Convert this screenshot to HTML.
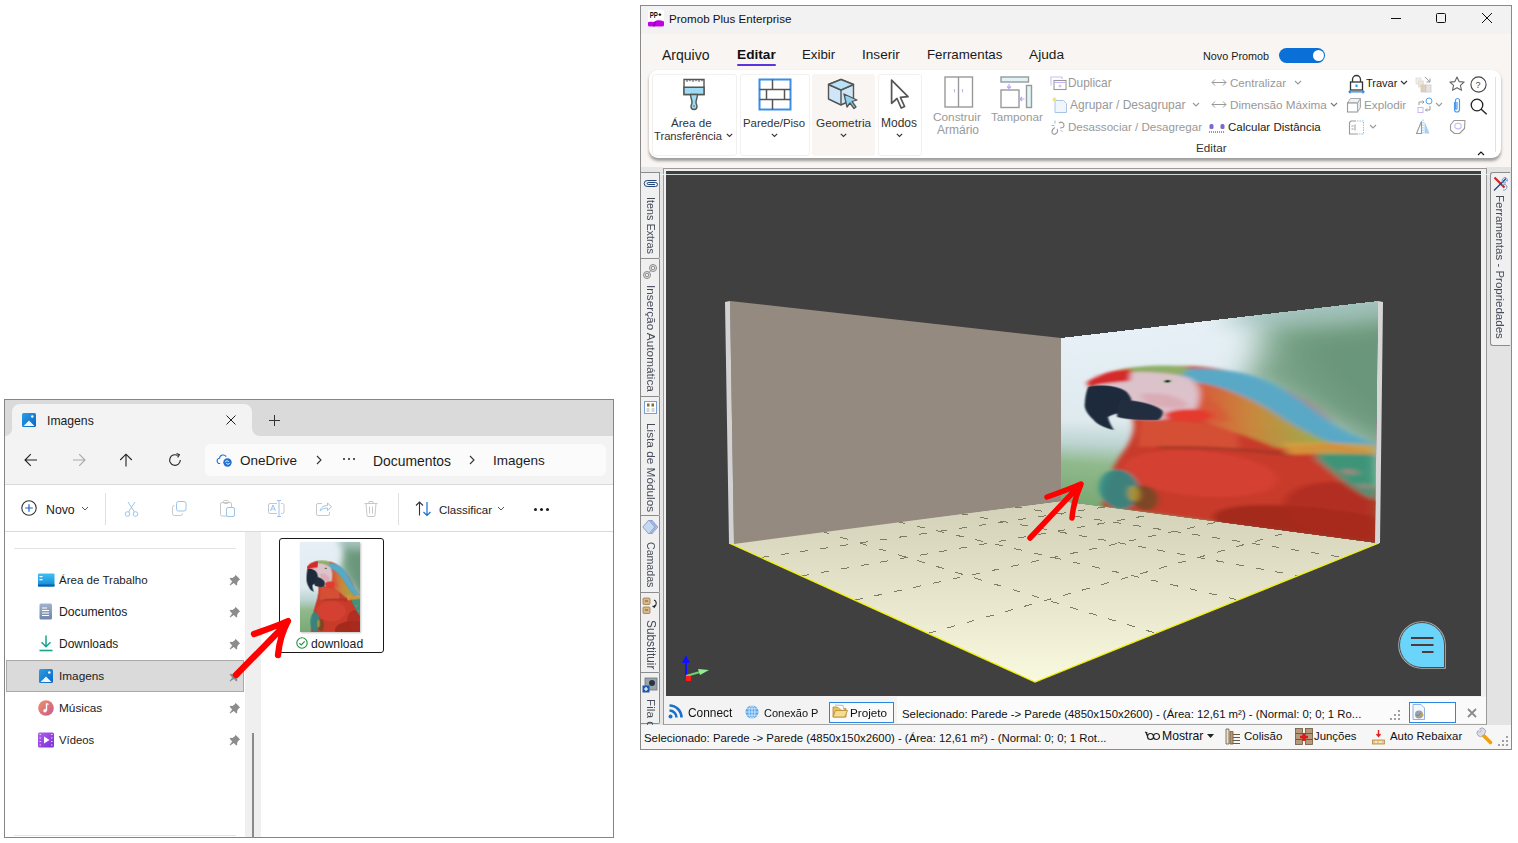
<!DOCTYPE html>
<html><head><meta charset="utf-8">
<style>
html,body{margin:0;padding:0}
body{width:1518px;height:843px;background:#fff;position:relative;overflow:hidden;font-family:"Liberation Sans",sans-serif;color:#1a1a1a}
.a{position:absolute}
.t{position:absolute;white-space:nowrap;line-height:16px;height:16px}
svg{position:absolute;overflow:visible}
</style></head><body>


<!-- ============ EXPLORER ============ -->
<div class="a" style="left:4px;top:399px;width:608px;height:437px;border:1px solid #858585;background:#fff"></div>
<div class="a" style="left:5px;top:400px;width:608px;height:84px;background:#f3f3f3"></div>
<div class="a" style="left:5px;top:400px;width:608px;height:12px;background:#dadada"></div>
<div class="a" style="left:5px;top:404px;width:7px;height:32px;background:#dadada;border-bottom-right-radius:7px"></div>
<div class="a" style="left:252px;top:404px;width:361px;height:32px;background:#dadada;border-bottom-left-radius:8px"></div>
<div class="a" style="left:12px;top:404px;width:240px;height:32px;background:#f3f3f3;border-radius:8px 8px 0 0"></div>
<!-- tab icon -->
<svg style="left:22px;top:413px" width="14" height="14" viewBox="0 0 14 14">
 <defs><linearGradient id="gImg" x1="0" y1="0" x2="1" y2="1"><stop offset="0" stop-color="#2aa0e6"/><stop offset="1" stop-color="#0b63c4"/></linearGradient></defs>
 <rect x="0" y="0" width="14" height="14" rx="1.5" fill="url(#gImg)"/>
 <path d="M1.5 13 L7 7.5 L12.5 13 Z" fill="#eef6fc"/>
 <circle cx="10.3" cy="3.5" r="1.2" fill="#fff"/>
</svg>
<div class="t" style="left:47px;top:413px;font-size:12.2px;color:#1b1b1b">Imagens</div>
<svg style="left:226px;top:415px" width="10" height="10" viewBox="0 0 10 10"><path d="M0.5 0.5L9.5 9.5M9.5 0.5L0.5 9.5" stroke="#1f1f1f" stroke-width="1"/></svg>
<svg style="left:269px;top:415px" width="11" height="11" viewBox="0 0 11 11"><path d="M5.5 0V11M0 5.5H11" stroke="#333" stroke-width="1"/></svg>
<!-- nav bar -->
<div class="a" style="left:5px;top:484px;width:608px;height:1px;background:#d9d9d9"></div>
<svg style="left:24px;top:453px" width="14" height="14" viewBox="0 0 14 14"><path d="M13 7H1.2M6.8 1.2L1 7l5.8 5.8" stroke="#222" stroke-width="1.1" fill="none"/></svg>
<svg style="left:72px;top:453px" width="14" height="14" viewBox="0 0 14 14"><path d="M1 7h11.8M7.2 1.2L13 7l-5.8 5.8" stroke="#a9a9a9" stroke-width="1.1" fill="none"/></svg>
<svg style="left:119px;top:453px" width="14" height="14" viewBox="0 0 14 14"><path d="M7 13.5V1.2M1.2 7L7 1.2 12.8 7" stroke="#222" stroke-width="1.1" fill="none"/></svg>
<svg style="left:168px;top:453px" width="14" height="14" viewBox="0 0 14 14"><path d="M12.3 7A5.3 5.3 0 1 1 9.6 2.4" stroke="#222" stroke-width="1.1" fill="none"/><path d="M8.6 0.6L11.4 1.8 9.6 4.4" stroke="#222" stroke-width="1.1" fill="none"/></svg>
<div class="a" style="left:205px;top:444px;width:401px;height:32px;background:#fbfbfb;border-radius:6px"></div>
<svg style="left:217px;top:452px" width="15" height="15" viewBox="0 0 15 15">
 <path d="M3.2 11.5H2.8A2.6 2.6 0 0 1 2.6 6.3 3.6 3.6 0 0 1 9.2 4.6" stroke="#1f6fd0" stroke-width="1.1" fill="none"/>
 <circle cx="10.5" cy="10.5" r="4.2" fill="#1f6fd0"/>
 <path d="M8.2 10.2c.6-1.6 2.4-1.8 3.6-.6M12.8 10.8c-.6 1.6-2.4 1.8-3.6.6" stroke="#fff" stroke-width="1" fill="none"/>
</svg>
<div class="t" style="left:240px;top:453px;font-size:13.5px;color:#1b1b1b">OneDrive</div>
<svg style="left:316px;top:455px" width="6" height="10" viewBox="0 0 6 10"><path d="M1 1l4 4-4 4" stroke="#333" stroke-width="1.1" fill="none"/></svg>
<div class="a" style="left:343px;top:458px;width:2.4px;height:2.4px;background:#222;border-radius:1.2px;box-shadow:5px 0 0 #222,10px 0 0 #222"></div>
<div class="t" style="left:373px;top:453px;font-size:13.9px;color:#1b1b1b">Documentos</div>
<svg style="left:469px;top:455px" width="6" height="10" viewBox="0 0 6 10"><path d="M1 1l4 4-4 4" stroke="#333" stroke-width="1.1" fill="none"/></svg>
<div class="t" style="left:493px;top:453px;font-size:13.5px;color:#1b1b1b">Imagens</div>
<!-- command bar -->
<div class="a" style="left:5px;top:531px;width:608px;height:1px;background:#d9d9d9"></div>
<svg style="left:21px;top:500px" width="16" height="16" viewBox="0 0 16 16"><circle cx="8" cy="8" r="7.2" stroke="#333" stroke-width="1.1" fill="none"/><path d="M8 4.2v7.6M4.2 8h7.6" stroke="#1a66c8" stroke-width="1.2"/></svg>
<div class="t" style="left:46px;top:502px;font-size:12.3px;color:#1b1b1b">Novo</div>
<svg style="left:81px;top:506px" width="8" height="5" viewBox="0 0 8 5"><path d="M1 1l3 3 3-3" stroke="#555" stroke-width="1" fill="none"/></svg>
<div class="a" style="left:105px;top:493px;width:1px;height:32px;background:#e0e0e0"></div>
<!-- cut -->
<svg style="left:124px;top:501px" width="15" height="16" viewBox="0 0 15 16"><path d="M4 1l6.5 10M11 1L4.5 11" stroke="#9cc4ea" stroke-width="1"/><circle cx="3.5" cy="13" r="2.3" stroke="#9cc4ea" fill="none"/><circle cx="11.5" cy="13" r="2.3" stroke="#9cc4ea" fill="none"/></svg>
<!-- copy -->
<svg style="left:172px;top:501px" width="15" height="15" viewBox="0 0 15 15"><rect x="4.5" y="0.5" width="9.5" height="9.5" rx="2" stroke="#9cc4ea" fill="none"/><path d="M2.5 4.5A2 2 0 0 0 .5 6.5v6a2 2 0 0 0 2 2h6a2 2 0 0 0 2-2" stroke="#c8c8c8" fill="none"/></svg>
<!-- paste -->
<svg style="left:220px;top:500px" width="15" height="17" viewBox="0 0 15 17"><rect x="0.5" y="2.5" width="11" height="13.5" rx="1.5" stroke="#c8c8c8" fill="none"/><rect x="3.5" y="0.5" width="5" height="3" rx="1" stroke="#c8c8c8" fill="none"/><rect x="6.5" y="7.5" width="8" height="9" rx="1.5" stroke="#9cc4ea" fill="#fff"/></svg>
<!-- rename -->
<svg style="left:268px;top:500px" width="17" height="17" viewBox="0 0 17 17"><path d="M9 3.5H2A1.5 1.5 0 0 0 .5 5v7A1.5 1.5 0 0 0 2 13.5h7M13 3.5h1.5A1.5 1.5 0 0 1 16 5v7a1.5 1.5 0 0 1-1.5 1.5H13" stroke="#c8c8c8" fill="none"/><path d="M11 .5v16M9 .5h4M9 16.5h4" stroke="#9cc4ea"/><path d="M2.5 11l2.5-6 2.5 6M3.5 9h3" stroke="#9cc4ea" fill="none"/></svg>
<!-- share -->
<svg style="left:316px;top:501px" width="16" height="15" viewBox="0 0 16 15"><path d="M6 2.5H2A1.5 1.5 0 0 0 .5 4v9A1.5 1.5 0 0 0 2 14.5h10a1.5 1.5 0 0 0 1.5-1.5v-2" stroke="#c8c8c8" fill="none"/><path d="M4 10c1-4 4-5.5 7.5-5.5V2l4 3.8-4 3.7V7C8.5 7 6 8 4 10z" stroke="#9cc4ea" fill="none"/></svg>
<!-- delete -->
<svg style="left:364px;top:500px" width="14" height="17" viewBox="0 0 14 17"><path d="M.5 3.5h13M5 3.5V1.5h4v2M2 3.5l1 12a1 1 0 0 0 1 1h6a1 1 0 0 0 1-1l1-12M5.5 6.5v7M8.5 6.5v7" stroke="#c8c8c8" fill="none"/></svg>
<div class="a" style="left:398px;top:493px;width:1px;height:32px;background:#e0e0e0"></div>
<svg style="left:415px;top:501px" width="17" height="15" viewBox="0 0 17 15"><path d="M4.5 14.5V1M1 4.5L4.5 1 8 4.5" stroke="#333" stroke-width="1.1" fill="none"/><path d="M12 1v13.5M8.5 11l3.5 3.5 3.5-3.5" stroke="#1a6fd0" stroke-width="1.2" fill="none"/></svg>
<div class="t" style="left:439px;top:502px;font-size:11.5px;color:#1b1b1b">Classificar</div>
<svg style="left:497px;top:506px" width="8" height="5" viewBox="0 0 8 5"><path d="M1 1l3 3 3-3" stroke="#555" stroke-width="1" fill="none"/></svg>
<div class="a" style="left:534px;top:508px;width:3px;height:3px;background:#1b1b1b;border-radius:2px;box-shadow:6px 0 0 #1b1b1b,12px 0 0 #1b1b1b"></div>

<!-- nav pane -->
<div class="a" style="left:14px;top:548px;width:222px;height:1px;background:#e3e3e3"></div>
<div class="a" style="left:6px;top:660px;width:236px;height:30px;background:#dadada;border:1px solid #a8a8a8"></div>
<!-- desktop icon -->
<svg style="left:38px;top:573px" width="17" height="14" viewBox="0 0 17 14"><defs><linearGradient id="gDk" x1="0" y1="0" x2="0" y2="1"><stop offset="0" stop-color="#3fc1f3"/><stop offset="1" stop-color="#1187d6"/></linearGradient></defs><rect x="0" y="0.5" width="16.5" height="13" rx="1" fill="url(#gDk)"/><rect x="1.5" y="3" width="3" height="1.3" fill="#fff"/><rect x="1.5" y="6" width="3" height="1.3" fill="#fff"/><rect x="0" y="11.5" width="16.5" height="2" fill="#0b5fa8"/></svg>
<div class="t" style="left:59px;top:572px;font-size:11.56px;color:#1b1b1b">Área de Trabalho</div>
<svg style="left:39px;top:603px" width="14" height="17" viewBox="0 0 14 17"><defs><linearGradient id="gDoc" x1="0" y1="0" x2="0" y2="1"><stop offset="0" stop-color="#9fb3cf"/><stop offset="1" stop-color="#6f86a8"/></linearGradient></defs><rect x="0.5" y="0.5" width="12.5" height="16" rx="1.5" fill="url(#gDoc)"/><path d="M3 5h5M3 7.5h7M3 10h7M3 12.5h7" stroke="#fff" stroke-width="1"/></svg>
<div class="t" style="left:59px;top:604px;font-size:12.2px;color:#1b1b1b">Documentos</div>
<svg style="left:39px;top:635px" width="14" height="17" viewBox="0 0 14 17"><path d="M7 0.5v11M2.5 7.2L7 11.7l4.5-4.5" stroke="#14a58a" stroke-width="1.5" fill="none"/><path d="M0.5 15.5h13" stroke="#14a58a" stroke-width="1.6"/></svg>
<div class="t" style="left:59px;top:636px;font-size:12px;color:#1b1b1b">Downloads</div>
<svg style="left:39px;top:669px" width="14" height="14" viewBox="0 0 14 14"><defs><linearGradient id="gImg2" x1="0" y1="0" x2="1" y2="1"><stop offset="0" stop-color="#2aa0e6"/><stop offset="1" stop-color="#0b63c4"/></linearGradient></defs><rect x="0" y="0" width="14" height="14" rx="1.5" fill="url(#gImg2)"/><path d="M1.5 13 L7 7.5 L12.5 13 Z" fill="#eef6fc"/><circle cx="10.3" cy="3.5" r="1.2" fill="#fff"/></svg>
<div class="t" style="left:59px;top:668px;font-size:11.8px;color:#1b1b1b">Imagens</div>
<svg style="left:38px;top:700px" width="16" height="16" viewBox="0 0 16 16"><defs><linearGradient id="gMus" x1="0" y1="0" x2="1" y2="1"><stop offset="0" stop-color="#f0906a"/><stop offset="1" stop-color="#c85a8a"/></linearGradient></defs><circle cx="8" cy="8" r="7.8" fill="url(#gMus)"/><path d="M8.5 3.5v7" stroke="#fff" stroke-width="1.4"/><circle cx="7" cy="10.8" r="1.7" fill="#fff"/><path d="M8.5 3.5l2 1" stroke="#fff" stroke-width="1.3"/></svg>
<div class="t" style="left:59px;top:700px;font-size:11.8px;color:#1b1b1b">Músicas</div>
<svg style="left:38px;top:732px" width="16" height="16" viewBox="0 0 16 16"><defs><linearGradient id="gVid" x1="0" y1="0" x2="1" y2="1"><stop offset="0" stop-color="#b45df0"/><stop offset="1" stop-color="#7a2fd0"/></linearGradient></defs><rect x="0" y="0.5" width="16" height="15" rx="1.5" fill="url(#gVid)"/><path d="M6 4.5v7l5.5-3.5z" fill="#fff"/><path d="M1.5 2.5h1.5M1.5 6h1.5M1.5 9.5h1.5M1.5 13h1.5M13 2.5h1.5M13 6h1.5M13 9.5h1.5M13 13h1.5" stroke="#e8d4ff" stroke-width="1.2"/></svg>
<div class="t" style="left:59px;top:732px;font-size:11.3px;color:#1b1b1b">Vídeos</div>
<!-- pins -->
<svg style="left:229px;top:574px" width="12" height="12" viewBox="0 0 12 12"><path d="M6.5 0.8l4.7 4.7-1.2 0.6-1.9 2.6 0.2 2-1 0.8L4.8 9 1.2 11.6 0.6 11 3.2 7.4 0.7 4.8l.8-1 2 .2 2.6-1.9z" fill="#8c8c8c"/></svg>
<svg style="left:229px;top:606px" width="12" height="12" viewBox="0 0 12 12"><path d="M6.5 0.8l4.7 4.7-1.2 0.6-1.9 2.6 0.2 2-1 0.8L4.8 9 1.2 11.6 0.6 11 3.2 7.4 0.7 4.8l.8-1 2 .2 2.6-1.9z" fill="#8c8c8c"/></svg>
<svg style="left:229px;top:638px" width="12" height="12" viewBox="0 0 12 12"><path d="M6.5 0.8l4.7 4.7-1.2 0.6-1.9 2.6 0.2 2-1 0.8L4.8 9 1.2 11.6 0.6 11 3.2 7.4 0.7 4.8l.8-1 2 .2 2.6-1.9z" fill="#8c8c8c"/></svg>
<svg style="left:229px;top:670px" width="12" height="12" viewBox="0 0 12 12"><path d="M6.5 0.8l4.7 4.7-1.2 0.6-1.9 2.6 0.2 2-1 0.8L4.8 9 1.2 11.6 0.6 11 3.2 7.4 0.7 4.8l.8-1 2 .2 2.6-1.9z" fill="#8c8c8c"/></svg>
<svg style="left:229px;top:702px" width="12" height="12" viewBox="0 0 12 12"><path d="M6.5 0.8l4.7 4.7-1.2 0.6-1.9 2.6 0.2 2-1 0.8L4.8 9 1.2 11.6 0.6 11 3.2 7.4 0.7 4.8l.8-1 2 .2 2.6-1.9z" fill="#8c8c8c"/></svg>
<svg style="left:229px;top:734px" width="12" height="12" viewBox="0 0 12 12"><path d="M6.5 0.8l4.7 4.7-1.2 0.6-1.9 2.6 0.2 2-1 0.8L4.8 9 1.2 11.6 0.6 11 3.2 7.4 0.7 4.8l.8-1 2 .2 2.6-1.9z" fill="#8c8c8c"/></svg>

<div class="a" style="left:14px;top:835px;width:222px;height:1px;background:#e6e6e6"></div>
<!-- splitter -->
<div class="a" style="left:245px;top:532px;width:16px;height:305px;background:#efefef"></div>
<div class="a" style="left:252px;top:733px;width:2px;height:104px;background:#8a8a8a"></div>
<!-- thumbnail -->
<div class="a" style="left:279px;top:538px;width:103px;height:113px;border:1.5px solid #1a1a1a;border-radius:3px;background:#fff"></div>
<div class="a" style="left:300px;top:542px;width:60px;height:90px;overflow:hidden;box-shadow:1px 1px 2px rgba(0,0,0,.25)"><div style="position:absolute;left:0;top:0;width:600px;height:900px;transform:scale(0.1);transform-origin:0 0"><svg width="600" height="900" viewBox="0 0 600 900" style="position:absolute;left:0;top:0;overflow:hidden">
 <defs>
  <linearGradient id="thbg" x1="0" y1="0" x2="0" y2="1"><stop offset="0" stop-color="#e6f0f6"/><stop offset=".5" stop-color="#dfeaef"/><stop offset=".64" stop-color="#bcd4d2"/><stop offset=".76" stop-color="#90b98c"/><stop offset="1" stop-color="#79a974"/></linearGradient>
  <linearGradient id="thnk" gradientUnits="userSpaceOnUse" x1="330" y1="0" x2="530" y2="0"><stop offset="0" stop-color="#d8603a"/><stop offset=".45" stop-color="#c8903e"/><stop offset="1" stop-color="#98b850"/></linearGradient>
  <filter id="thb0" x="-50%" y="-50%" width="200%" height="200%"><feGaussianBlur stdDeviation="30"/></filter>
  <filter id="thb1" x="-20%" y="-20%" width="140%" height="140%"><feGaussianBlur stdDeviation="7"/></filter>
  <filter id="thb2" x="-20%" y="-20%" width="140%" height="140%"><feGaussianBlur stdDeviation="3"/></filter>
 </defs>
 <rect width="600" height="900" fill="url(#thbg)"/>
 <g filter="url(#thb0)">
  <path d="M410 -40C440 60 435 170 405 260L640 640L680 -40Z" fill="#7aa488"/>
  <path d="M480 120C490 250 530 380 600 480L680 520L680 100Z" fill="#6a967c"/>
  <path d="M380 -40L680 -40L680 50C600 70 480 70 380 40Z" fill="#a9c7c4" opacity=".8"/>
 </g>
 <g filter="url(#thb1)">
  <path d="M74 245C160 185 260 180 330 205C420 240 500 330 545 460C570 500 590 525 600 530L600 900L110 900C115 800 130 700 160 610C180 550 190 480 180 440C120 420 80 330 74 245Z" fill="#c84a30"/>
  <path d="M190 440C260 432 330 440 400 462C470 490 540 515 600 530L600 900L110 900C115 800 130 700 160 610C180 550 190 500 190 440Z" fill="#c83a2a"/>
  <ellipse cx="310" cy="690" rx="150" ry="105" fill="#e04838" opacity=".5"/>
  <path d="M200 450C260 445 330 455 390 480L395 570C330 565 260 570 195 580Z" fill="#d8553a" opacity=".8"/>
  <ellipse cx="520" cy="880" rx="170" ry="90" fill="#98241a" opacity=".75"/>
  <ellipse cx="560" cy="790" rx="90" ry="110" fill="#a82a1c" opacity=".7"/>
  <path d="M240 578C320 570 400 566 480 585" stroke="#5a2a22" stroke-width="12" fill="none" opacity=".35"/>
  <path d="M300 210C360 215 410 235 450 290C495 350 525 420 545 460C565 495 590 520 600 530L600 562C580 552 560 542 540 532C510 502 490 472 470 442C440 392 400 332 350 292C320 272 290 262 260 257Z" fill="#58a8c6"/>
  <path d="M150 192C200 180 250 182 300 200L290 240C240 230 190 230 150 240Z" fill="#8fae68"/>
  <path d="M310 270C370 300 420 350 470 442C490 472 510 502 540 532L460 560C420 520 380 490 340 460C310 430 300 380 300 300Z" fill="url(#thnk)" opacity=".9"/>
  <path d="M300 300C340 330 370 390 380 450L320 455C310 400 300 360 290 320Z" fill="#d8583a" opacity=".75"/>
  <path d="M90 215C150 200 250 210 300 250C330 290 325 360 310 420C280 445 230 450 180 440C120 420 90 330 90 215Z" fill="#dcc2ca"/>
  <path d="M200 320C250 310 290 340 300 380C280 400 240 390 210 360Z" fill="#d89aa6" opacity=".55"/>
  <ellipse cx="300" cy="425" rx="48" ry="30" fill="#e43a2e"/>
  <path d="M70 250C100 205 150 190 180 195L175 255C140 258 100 262 75 275Z" fill="#d42a2a"/>
  <path d="M520 560C560 558 590 566 600 572L600 740C570 710 545 650 520 600Z" fill="#3e9478"/>
  <circle cx="565" cy="640" r="10" fill="#e07a80" opacity=".7"/><circle cx="585" cy="690" r="9" fill="#e07a80" opacity=".6"/>
  <path d="M468 536C520 528 570 530 600 534L600 568C560 570 520 576 475 584Z" fill="#d6a03e" opacity=".85"/>
  <ellipse cx="150" cy="800" rx="48" ry="100" fill="#2e8a86" opacity=".9"/>
  <ellipse cx="210" cy="830" rx="30" ry="60" fill="#6a4a24" opacity=".8"/>
  <ellipse cx="185" cy="815" rx="14" ry="40" fill="#c8a232" opacity=".7"/>
 </g>
 <g filter="url(#thb2)">
  <path d="M74 275C120 258 165 288 172 318C180 340 182 362 178 383C160 410 132 420 124 434C126 460 134 485 138 500C115 490 95 470 88 450C72 420 62 390 65 358C66 320 70 290 74 275Z" fill="#1c2a3b"/>
  <path d="M155 347C200 350 240 380 248 404C250 420 245 440 238 447C200 450 165 445 146 433C145 400 148 370 155 347Z" fill="#202f3f"/>
  <circle cx="258" cy="263" r="15" fill="#cdc8c0"/>
  <circle cx="258" cy="263" r="7" fill="#1e1e1e"/>
 </g>
</svg></div></div>
<svg style="left:296px;top:637px" width="12" height="12" viewBox="0 0 12 12"><circle cx="6" cy="6" r="5.2" stroke="#21913c" stroke-width="1.1" fill="#fff"/><path d="M3.3 6.2l1.9 1.8 3.5-3.6" stroke="#21913c" stroke-width="1.1" fill="none"/></svg>
<div class="t" style="left:311px;top:636px;font-size:12.2px;color:#1b1b1b">download</div>
<!-- red arrow -->
<svg style="left:0;top:0" width="1518" height="843"><path d="M236 675L287 623M254 634C265 630 277 626 288 621C282 632 279 644 278 655" stroke="#ff0000" stroke-width="6.3" stroke-linecap="round" stroke-linejoin="round" fill="none"/></svg>


<!-- ============ PROMOB ============ -->
<div class="a" style="left:640px;top:5px;width:870px;height:743px;border:1px solid #8a8a8a;background:#f8f5f2"></div>
<div class="a" style="left:641px;top:6px;width:870px;height:28px;background:#f2f2f2"></div>
<!-- logo -->
<svg style="left:648px;top:10px" width="16" height="17" viewBox="0 0 16 17">
 <rect x="0" y="0" width="16" height="17" rx="2" fill="#fff"/>
 <text x="0" y="0" font-family="Liberation Sans" font-weight="bold" font-size="7.4" fill="#111" transform="translate(1.8 8.2) scale(.82 1.15)" letter-spacing="-0.2">PP</text>
 <path d="M10.6 4.6h2.6M11.9 3.3v2.6" stroke="#111" stroke-width="1.1"/>
 <path d="M0 12.2c2-.6 4-.5 6-.2 1.8-2.2 6-2.2 10-.6V15a1.5 1.5 0 0 1-1.5 1.5H1.5A1.5 1.5 0 0 1 0 15z" fill="#c100e6"/>
 <path d="M6.2 11.9c-.9 1.2-1.3 2.9-1.1 4.6h2c0-1.8.2-3.3 1-4.9z" fill="#6a0080" opacity=".55"/>
</svg>
<div class="t" style="left:669px;top:11px;font-size:11.6px;color:#111">Promob Plus Enterprise</div>
<div class="a" style="left:1391px;top:18px;width:10px;height:1px;background:#111"></div>
<div class="a" style="left:1436px;top:13px;width:8px;height:8px;border:1px solid #111;border-radius:1.5px"></div>
<svg style="left:1481px;top:12px" width="12" height="12" viewBox="0 0 12 12"><path d="M1 1l10 10M11 1L1 11" stroke="#111" stroke-width="1"/></svg>
<!-- menu -->
<div class="t" style="left:662px;top:47px;font-size:14px;color:#1a1a1a">Arquivo</div>
<div class="t" style="left:737px;top:47px;font-size:13.7px;font-weight:bold;color:#111">Editar</div>
<div class="a" style="left:737px;top:64px;width:39px;height:2px;background:#5a34e0;border-radius:1px"></div>
<div class="t" style="left:802px;top:47px;font-size:13.3px;color:#1a1a1a">Exibir</div>
<div class="t" style="left:862px;top:47px;font-size:13.6px;color:#1a1a1a">Inserir</div>
<div class="t" style="left:927px;top:47px;font-size:13.3px;color:#1a1a1a">Ferramentas</div>
<div class="t" style="left:1029px;top:47px;font-size:13.7px;color:#1a1a1a">Ajuda</div>
<div class="t" style="left:1203px;top:48px;font-size:10.8px;color:#1a1a1a">Novo Promob</div>
<div class="a" style="left:1279px;top:48px;width:46px;height:15px;background:#0a6fd6;border-radius:8px"></div>
<div class="a" style="left:1313px;top:50px;width:11px;height:11px;background:#fff;border-radius:6px"></div>
<!-- ribbon panel -->
<div class="a" style="left:649px;top:70px;width:852px;height:88px;background:#fff;border-radius:9px;box-shadow:0 2.5px 3px rgba(0,0,0,.36)"></div>
<div class="a" style="left:652px;top:74px;width:83px;height:80px;border:1px solid #f3f1ef;border-radius:3px"></div>
<div class="a" style="left:740px;top:74px;width:68px;height:80px;border:1px solid #f3f1ef;border-radius:3px"></div>
<div class="a" style="left:812px;top:74px;width:63px;height:82px;background:#f8f5f2;border-radius:3px"></div>
<div class="a" style="left:878px;top:74px;width:42px;height:80px;border:1px solid #f3f1ef;border-radius:3px"></div>
<!-- paintbrush -->
<svg style="left:682px;top:78px" width="24" height="33" viewBox="0 0 24 33">
 <path d="M2 1.5h20v15H2z" fill="#fff" stroke="#555" stroke-width="1.4"/>
 <path d="M2 9.2h20v7.3H2z" fill="#9ddcf2" stroke="#555" stroke-width="1.4"/>
 <path d="M5 1.5v2.5M8 1.5v1.8M11 1.5v2.5M14 1.5v1.8M17 1.5v2.5M20 1.5v1.8" stroke="#555" stroke-width="1"/>
 <path d="M8.5 16.5h7c0 3-1.5 5-1.5 8 0 1.5 1 2.5 1 4a3 3 0 0 1-6 0c0-1.5 1-2.5 1-4 0-3-1.5-5-1.5-8z" fill="#9ddcf2" stroke="#555" stroke-width="1.4" stroke-linejoin="round"/>
 <circle cx="12" cy="28" r=".8" fill="#555"/>
</svg>
<div class="t" style="left:671px;top:115px;font-size:11.6px;color:#333">Área de</div>
<div class="t" style="left:654px;top:128px;font-size:11.2px;color:#333">Transferência</div>
<svg style="left:726px;top:133px" width="7" height="5" viewBox="0 0 7 5"><path d="M.8 .8l2.7 2.7L6.2 .8" stroke="#333" stroke-width="1.1" fill="none"/></svg>
<!-- brick wall -->
<svg style="left:758px;top:78px" width="34" height="33" viewBox="0 0 34 33">
 <rect x="1.5" y="1.5" width="31" height="30" fill="#fff" stroke="#3b8ee8" stroke-width="2"/>
 <path d="M1.5 11.5h31M1.5 21.5h31M14.5 1.5v10M8.5 11.5v10M26.5 11.5v10M14.5 21.5v10" stroke="#555" stroke-width="1.5"/>
</svg>
<div class="t" style="left:743px;top:115px;font-size:11.4px;color:#333">Parede/Piso</div>
<svg style="left:771px;top:133px" width="7" height="5" viewBox="0 0 7 5"><path d="M.8 .8l2.7 2.7L6.2 .8" stroke="#333" stroke-width="1.1" fill="none"/></svg>
<!-- cube with cursor -->
<svg style="left:827px;top:78px" width="34" height="33" viewBox="0 0 34 33">
 <path d="M14 1.5L26.5 6.5 26.5 21 14 27 1.5 21 1.5 6.5Z" fill="#cfe6f8" stroke="#555" stroke-width="1.4" stroke-linejoin="round"/>
 <path d="M1.5 6.5L14 12 26.5 6.5M14 12v15" stroke="#555" stroke-width="1.4" fill="none"/>
 <path d="M14 1.5L26.5 6.5 14 12 1.5 6.5Z" fill="#b8e2f6" stroke="#555" stroke-width="1.4" stroke-linejoin="round"/>
 <path d="M17 16l13 6-5 1.5 4 5.5-2 1.5-4-5.5-3 4z" fill="#8fd3ee" stroke="#555" stroke-width="1.3" stroke-linejoin="round"/>
</svg>
<div class="t" style="left:816px;top:115px;font-size:11.8px;color:#333">Geometria</div>
<svg style="left:840px;top:133px" width="7" height="5" viewBox="0 0 7 5"><path d="M.8 .8l2.7 2.7L6.2 .8" stroke="#333" stroke-width="1.1" fill="none"/></svg>
<!-- cursor -->
<svg style="left:888px;top:78px" width="22" height="33" viewBox="0 0 22 33">
 <path d="M3.6 2.2V25.3L9 20.5 13.2 30 16.6 28.5 12.4 19.3 20 18.7Z" fill="#fff" stroke="#555" stroke-width="1.7" stroke-linejoin="round"/>
</svg>
<div class="t" style="left:881px;top:115px;font-size:12px;color:#333">Modos</div>
<svg style="left:896px;top:133px" width="7" height="5" viewBox="0 0 7 5"><path d="M.8 .8l2.7 2.7L6.2 .8" stroke="#333" stroke-width="1.1" fill="none"/></svg>
<!-- construir armario -->
<svg style="left:944px;top:76px" width="30" height="32" viewBox="0 0 30 32">
 <rect x="1" y="1" width="27.5" height="30" fill="#fff" stroke="#999" stroke-width="1.4"/>
 <path d="M14.5 1v30" stroke="#999" stroke-width="1.4"/>
 <path d="M10.5 13v3.5M18.5 13v3.5" stroke="#c9b8f0" stroke-width="1.2"/>
</svg>
<div class="t" style="left:933px;top:109px;font-size:11.8px;color:#999">Construir</div>
<div class="t" style="left:937px;top:122px;font-size:12px;color:#999">Armário</div>
<!-- tamponar -->
<svg style="left:1000px;top:76px" width="34" height="33" viewBox="0 0 34 33">
 <rect x="1" y="1" width="27.5" height="5" fill="#dff4f8" stroke="#999" stroke-width="1.4"/>
 <rect x="1" y="14" width="18" height="17.5" fill="#fff" stroke="#999" stroke-width="1.4"/>
 <rect x="26.5" y="9.5" width="5" height="22" fill="#dff4f8" stroke="#999" stroke-width="1.4"/>
 <path d="M9 8v4.5M7 10.5l2 2 2-2M24.5 23h-4.5M22 21l-2 2 2 2" stroke="#b9a4f0" stroke-width="1.2" fill="none"/>
</svg>
<div class="t" style="left:991px;top:109px;font-size:11.7px;color:#999">Tamponar</div>
<!-- small col 1 -->
<svg style="left:1050px;top:76px" width="17" height="14" viewBox="0 0 17 14"><path d="M1 9.5V1h11v2" stroke="#c8c0f0" stroke-width="1.1" fill="none"/><rect x="4" y="4.5" width="12" height="9" fill="#fff" stroke="#999" stroke-width="1.1"/><path d="M4 6.5h12M10 8.5v3M8.5 10h3" stroke="#c3b3f3" stroke-width="1"/></svg>
<div class="t" style="left:1068px;top:75px;font-size:11.9px;color:#999">Duplicar</div>
<svg style="left:1052px;top:97px" width="15" height="16" viewBox="0 0 15 16"><path d="M3 3.5h8.5l3 3v9h-11.5z" fill="#f0f6fc" stroke="#a8c4e8" stroke-width="1"/><circle cx="2.5" cy="2.5" r="2" fill="#f6e27a"/></svg>
<div class="t" style="left:1070px;top:97px;font-size:12px;color:#999">Agrupar / Desagrupar</div>
<svg style="left:1192px;top:102px" width="8" height="6" viewBox="0 0 8 6"><path d="M1 1l3 3 3-3" stroke="#999" stroke-width="1.1" fill="none"/></svg>
<svg style="left:1050px;top:119px" width="16" height="17" viewBox="0 0 16 17"><path d="M9 4a3 3 0 0 1 5 2.5c0 2-2 2.5-4 2.5M7 10a3 3 0 0 1-1 4.5c-2 1.5-4 .5-4-1.5 0-2 2-4 3-4.5" stroke="#999" stroke-width="1.1" fill="none"/><path d="M1.5 6.5h3M5 1.5v3M10.5 11l2 2" stroke="#8fc0ef" stroke-width="1"/></svg>
<div class="t" style="left:1068px;top:119px;font-size:11.6px;color:#999">Desassociar / Desagregar</div>
<!-- small col 2 -->
<svg style="left:1211px;top:78px" width="16" height="9" viewBox="0 0 16 9"><path d="M1 4.5h14M4 1.5l-3 3 3 3M12 1.5l3 3-3 3" stroke="#999" stroke-width="1" fill="none"/></svg>
<div class="t" style="left:1230px;top:75px;font-size:11.6px;color:#999">Centralizar</div>
<svg style="left:1294px;top:80px" width="8" height="6" viewBox="0 0 8 6"><path d="M1 1l3 3 3-3" stroke="#999" stroke-width="1.1" fill="none"/></svg>
<svg style="left:1211px;top:100px" width="16" height="9" viewBox="0 0 16 9"><path d="M1 4.5h14M4 1.5l-3 3 3 3M12 1.5l3 3-3 3" stroke="#999" stroke-width="1" fill="none"/></svg>
<div class="t" style="left:1230px;top:97px;font-size:11.7px;color:#999">Dimensão Máxima</div>
<svg style="left:1330px;top:102px" width="8" height="6" viewBox="0 0 8 6"><path d="M1 1l3 3 3-3" stroke="#777" stroke-width="1.1" fill="none"/></svg>
<svg style="left:1208px;top:121px" width="18" height="12" viewBox="0 0 18 12"><path d="M1 11h16" stroke="#333" stroke-width="1" stroke-dasharray="1 1"/><rect x="1.5" y="3" width="4" height="5" rx="1.5" fill="#7a6ad0"/><rect x="12.5" y="3" width="4" height="5" rx="1.5" fill="#7a6ad0"/></svg>
<div class="t" style="left:1228px;top:119px;font-size:11.5px;color:#1a1a1a">Calcular Distância</div>
<div class="t" style="left:1196px;top:140px;font-size:11.7px;color:#333">Editar</div>
<!-- col 3 -->
<svg style="left:1348px;top:75px" width="17" height="18" viewBox="0 0 17 18"><path d="M4.5 7V4.5a4 4 0 0 1 8 0V7" stroke="#333" stroke-width="1.3" fill="none"/><rect x="2.5" y="7" width="12" height="8" fill="#fff" stroke="#333" stroke-width="1.3"/><rect x="7.5" y="9.5" width="2" height="2.5" fill="#1aa0e0"/><path d="M1 16.8h15M2.5 15.3l-1.5 1.5 1.5 1.5M14.5 15.3l1.5 1.5-1.5 1.5" stroke="#2a86e0" stroke-width="1.2" fill="none"/></svg>
<div class="t" style="left:1366px;top:75px;font-size:11px;color:#1a1a1a">Travar</div>
<svg style="left:1400px;top:80px" width="8" height="6" viewBox="0 0 8 6"><path d="M1 1l3 3 3-3" stroke="#333" stroke-width="1.2" fill="none"/></svg>
<svg style="left:1415px;top:76px" width="17" height="17" viewBox="0 0 17 17"><rect x="1" y="2" width="5" height="6" fill="#f4efe6" stroke="#ddd" stroke-width=".8"/><rect x="3.5" y="5" width="5" height="6" fill="#efe6d6" stroke="#ddd" stroke-width=".8"/><rect x="6" y="9" width="5" height="7" fill="#e0cfb4" stroke="#ccc" stroke-width=".8"/><rect x="11" y="9" width="5" height="7" fill="#e4e4e4" stroke="#ccc" stroke-width=".8"/><path d="M10 1l5 5M15 2.5V6h-3.5" stroke="#999" stroke-width="1" fill="none"/></svg>
<svg style="left:1449px;top:76px" width="16" height="16" viewBox="0 0 16 16"><path d="M8 1l2.1 4.6 5 .5-3.7 3.3 1.1 4.9L8 11.8 3.5 14.3l1.1-4.9L.9 6.1l5-.5z" fill="none" stroke="#666" stroke-width="1.1" stroke-linejoin="round"/></svg>
<svg style="left:1470px;top:76px" width="17" height="17" viewBox="0 0 17 17"><circle cx="8.5" cy="8.5" r="7.6" fill="none" stroke="#444" stroke-width="1.1"/><text x="5.6" y="12" font-family="Liberation Sans" font-size="9" fill="#444">?</text></svg>
<svg style="left:1346px;top:97px" width="17" height="16" viewBox="0 0 17 16"><path d="M1.5 6l3-4.5h10l-3 4.5z" fill="#eef3f8" stroke="#aaa" stroke-width="1"/><rect x="1.5" y="6" width="10" height="9" fill="#fff" stroke="#999" stroke-width="1.1"/><path d="M11.5 6l3-4.5v9l-3 4.5z" fill="#dfe8f0" stroke="#aaa" stroke-width="1"/></svg>
<div class="t" style="left:1364px;top:97px;font-size:11.7px;color:#999">Explodir</div>
<svg style="left:1417px;top:97px" width="16" height="17" viewBox="0 0 16 17"><circle cx="12" cy="4" r="3" fill="none" stroke="#4ea4f0" stroke-width="1"/><rect x="1" y="10.5" width="5" height="5" fill="none" stroke="#c8b8f4" stroke-width="1"/><path d="M2 8V5h5M5.5 3.5l1.5 1.5-1.5 1.5M13 9v4H8.5M10 11.5l-1.5 1.5 1.5 1.5" stroke="#999" stroke-width="1" fill="none"/></svg>
<svg style="left:1435px;top:102px" width="8" height="6" viewBox="0 0 8 6"><path d="M1 1l3 3 3-3" stroke="#999" stroke-width="1.1" fill="none"/></svg>
<svg style="left:1452px;top:97px" width="10" height="17" viewBox="0 0 10 17"><path d="M2.5 5v7.5a2.5 2.5 0 0 0 5 0V3.5a2 2 0 0 0-4 0v8a.7.7 0 0 0 1.5 0V5" fill="none" stroke="#4a9cf0" stroke-width="1.2"/></svg>
<svg style="left:1470px;top:98px" width="18" height="17" viewBox="0 0 18 17"><circle cx="7" cy="7" r="5.8" fill="none" stroke="#222" stroke-width="1.3"/><path d="M11.2 11.2l5.5 5" stroke="#222" stroke-width="1.4"/></svg>
<svg style="left:1348px;top:119px" width="17" height="16" viewBox="0 0 17 16"><path d="M8 2H3L1.5 3.5v11.5h8" fill="#fff" stroke="#999" stroke-width="1.1"/><path d="M9 2h6.5v13H9" fill="none" stroke="#8fc0ef" stroke-width="1" stroke-dasharray="1.5 1"/><path d="M3.5 7h2M3.5 10h2M7 5.5v6" stroke="#999" stroke-width="1"/></svg>
<svg style="left:1369px;top:124px" width="8" height="6" viewBox="0 0 8 6"><path d="M1 1l3 3 3-3" stroke="#999" stroke-width="1.1" fill="none"/></svg>
<svg style="left:1415px;top:119px" width="16" height="16" viewBox="0 0 16 16"><path d="M6.5 2.5L1.5 14.5h5z" fill="#fff" stroke="#999" stroke-width="1.1" stroke-linejoin="round"/><path d="M9.5 2.5L14.5 14.5h-5z" fill="#a8d0f4"/><path d="M8 .5v15" stroke="#8fc0ef" stroke-width="1" stroke-dasharray="1.5 1"/></svg>
<svg style="left:1449px;top:119px" width="17" height="16" viewBox="0 0 17 16"><path d="M5 1.5h11l-.5 8-5 5H5.5L1.5 11V6z" fill="#fff" stroke="#999" stroke-width="1.1" stroke-linejoin="round"/><ellipse cx="9" cy="7" rx="3.2" ry="2.8" fill="none" stroke="#c8b8f4" stroke-width="1.1"/></svg>
<div class="a" style="left:1495px;top:77px;width:1px;height:75px;background:#e8dfd8"></div>
<svg style="left:1477px;top:151px" width="8" height="5" viewBox="0 0 8 5"><path d="M1 4l3-3 3 3" stroke="#111" stroke-width="1.1" fill="none"/></svg>

<!-- left dock strip -->
<div class="a" style="left:641px;top:167px;width:22px;height:558px;background:#e6e6e6"></div>
<!-- right dock -->
<div class="a" style="left:1486px;top:167px;width:25px;height:558px;background:#e3e3e3"></div>
<!-- viewport frame -->
<div class="a" style="left:663px;top:168px;width:824px;height:557px;background:#f0f0f0;border:1px solid #9a9a9a;box-sizing:border-box"></div>
<div class="a" style="left:666px;top:171px;width:815px;height:525px;background:#404040"></div>

<!-- ===== viewport scene ===== -->
<div class="a" style="left:666px;top:171px;width:815px;height:525px;overflow:hidden">
<svg style="left:-666px;top:-171px" width="1518" height="843">
 <defs>
  <linearGradient id="flg" gradientUnits="userSpaceOnUse" x1="0" y1="505" x2="0" y2="682"><stop offset="0" stop-color="#d3d1b7"/><stop offset="1" stop-color="#f9f9e0"/></linearGradient>
 </defs>
 <path d="M729 543L1061 501L1379 543L1035 682Z" fill="url(#flg)"/>
 <g stroke="#7c7c66" stroke-width="1" stroke-dasharray="8 12" fill="none" shape-rendering="crispEdges"><path d="M760.9 557.5L1105.6 506.9"/><path d="M821.3 531.3L1155.7 633.2"/><path d="M801.5 575.9L1157.5 513.7"/><path d="M897.2 521.7L1238.1 599.9"/><path d="M854.8 600.1L1218.4 521.8"/><path d="M960.7 513.7L1297.9 575.8"/><path d="M928.1 633.4L1291.0 531.4"/><path d="M1014.6 506.9L1343.3 557.4"/></g>
 <path d="M729 543L1035 682L1379 543" stroke="#f2f200" stroke-width="1.3" fill="none"/>
 <path d="M730 301L1061 338L1061 501L734 544Z" fill="#958a80"/>
 <path d="M725 302L730 301L734 544L729 543Z" fill="#d2d2d2"/>
 <path d="M1378 301L1383 302L1380 543L1375 543Z" fill="#d6d6d6"/>
</svg>
</div>
<div class="a" style="left:0;top:0;width:600px;height:900px;transform-origin:0 0;transform:matrix3d(-0.2239658,-0.2259932,0,-0.000545935,0.0075739,0.1846875,0,0.000007138,0,0,1,0,1061.0000,338.0000,0,1)"><svg width="600" height="900" viewBox="0 0 600 900" style="position:absolute;left:0;top:0;overflow:hidden">
 <defs>
  <linearGradient id="wlbg" x1="0" y1="0" x2="0" y2="1"><stop offset="0" stop-color="#e6f0f6"/><stop offset=".5" stop-color="#dfeaef"/><stop offset=".64" stop-color="#bcd4d2"/><stop offset=".76" stop-color="#90b98c"/><stop offset="1" stop-color="#79a974"/></linearGradient>
  <linearGradient id="wlnk" gradientUnits="userSpaceOnUse" x1="330" y1="0" x2="530" y2="0"><stop offset="0" stop-color="#d8603a"/><stop offset=".45" stop-color="#c8903e"/><stop offset="1" stop-color="#98b850"/></linearGradient>
  <filter id="wlb0" x="-50%" y="-50%" width="200%" height="200%"><feGaussianBlur stdDeviation="30"/></filter>
  <filter id="wlb1" x="-20%" y="-20%" width="140%" height="140%"><feGaussianBlur stdDeviation="7"/></filter>
  <filter id="wlb2" x="-20%" y="-20%" width="140%" height="140%"><feGaussianBlur stdDeviation="2.5"/></filter>
 </defs>
 <rect width="600" height="900" fill="url(#wlbg)"/>
 <g filter="url(#wlb0)">
  <path d="M410 -40C440 60 435 170 405 260L640 640L680 -40Z" fill="#7aa488"/>
  <path d="M480 120C490 250 530 380 600 480L680 520L680 100Z" fill="#6a967c"/>
  <path d="M380 -40L680 -40L680 50C600 70 480 70 380 40Z" fill="#a9c7c4" opacity=".8"/>
 </g>
 <g filter="url(#wlb1)">
  <path d="M74 245C160 185 260 180 330 205C420 240 500 330 545 460C570 500 590 525 600 530L600 900L110 900C115 800 130 700 160 610C180 550 190 480 180 440C120 420 80 330 74 245Z" fill="#c84a30"/>
  <path d="M190 440C260 432 330 440 400 462C470 490 540 515 600 530L600 900L110 900C115 800 130 700 160 610C180 550 190 500 190 440Z" fill="#c83a2a"/>
  <ellipse cx="310" cy="690" rx="150" ry="105" fill="#e04838" opacity=".5"/>
  <path d="M200 450C260 445 330 455 390 480L395 570C330 565 260 570 195 580Z" fill="#d8553a" opacity=".8"/>
  <ellipse cx="520" cy="880" rx="170" ry="90" fill="#98241a" opacity=".75"/>
  <ellipse cx="560" cy="790" rx="90" ry="110" fill="#a82a1c" opacity=".7"/>
  <path d="M240 578C320 570 400 566 480 585" stroke="#5a2a22" stroke-width="12" fill="none" opacity=".35"/>
  <path d="M300 210C360 215 410 235 450 290C495 350 525 420 545 460C565 495 590 520 600 530L600 562C580 552 560 542 540 532C510 502 490 472 470 442C440 392 400 332 350 292C320 272 290 262 260 257Z" fill="#58a8c6"/>
  <path d="M150 192C200 180 250 182 300 200L290 240C240 230 190 230 150 240Z" fill="#8fae68"/>
  <path d="M310 270C370 300 420 350 470 442C490 472 510 502 540 532L460 560C420 520 380 490 340 460C310 430 300 380 300 300Z" fill="url(#wlnk)" opacity=".9"/>
  <path d="M300 300C340 330 370 390 380 450L320 455C310 400 300 360 290 320Z" fill="#d8583a" opacity=".75"/>
  <path d="M90 215C150 200 250 210 300 250C330 290 325 360 310 420C280 445 230 450 180 440C120 420 90 330 90 215Z" fill="#dcc2ca"/>
  <path d="M200 320C250 310 290 340 300 380C280 400 240 390 210 360Z" fill="#d89aa6" opacity=".55"/>
  <ellipse cx="300" cy="425" rx="48" ry="30" fill="#e43a2e"/>
  <path d="M70 250C100 205 150 190 180 195L175 255C140 258 100 262 75 275Z" fill="#d42a2a"/>
  <path d="M520 560C560 558 590 566 600 572L600 740C570 710 545 650 520 600Z" fill="#3e9478"/>
  <circle cx="565" cy="640" r="10" fill="#e07a80" opacity=".7"/><circle cx="585" cy="690" r="9" fill="#e07a80" opacity=".6"/>
  <path d="M468 536C520 528 570 530 600 534L600 568C560 570 520 576 475 584Z" fill="#d6a03e" opacity=".85"/>
  <ellipse cx="150" cy="800" rx="48" ry="100" fill="#2e8a86" opacity=".9"/>
  <ellipse cx="210" cy="830" rx="30" ry="60" fill="#6a4a24" opacity=".8"/>
  <ellipse cx="185" cy="815" rx="14" ry="40" fill="#c8a232" opacity=".7"/>
 </g>
 <g filter="url(#wlb2)">
  <path d="M74 275C120 258 165 288 172 318C180 340 182 362 178 383C160 410 132 420 124 434C126 460 134 485 138 500C115 490 95 470 88 450C72 420 62 390 65 358C66 320 70 290 74 275Z" fill="#1c2a3b"/>
  <path d="M155 347C200 350 240 380 248 404C250 420 245 440 238 447C200 450 165 445 146 433C145 400 148 370 155 347Z" fill="#202f3f"/>
  <circle cx="258" cy="263" r="15" fill="#cdc8c0"/>
  <circle cx="258" cy="263" r="7" fill="#1e1e1e"/>
 </g>
</svg></div>
<svg style="left:0;top:0" width="1518" height="843">
 <path d="M1030 538L1080 485M1047 497C1058 493 1070 489 1081 484C1076 495 1073 507 1072 518" stroke="#ff0000" stroke-width="5.5" stroke-linecap="round" stroke-linejoin="round" fill="none"/>
 <path d="M686 676V660" stroke="#1010ff" stroke-width="2"/><path d="M682 663L686 655 690 663Z" fill="#1010ff"/>
 <path d="M686 676L700 672" stroke="#70d070" stroke-width="2"/><path d="M698 669L709 670 700 675Z" fill="#90f090"/>
 <rect x="686" y="676" width="5" height="5" fill="#ff1a1a"/>
 <path d="M1422 622.5A22.5 22.5 0 1 0 1422 667.5H1444.5V645A22.5 22.5 0 0 0 1422 622.5Z" fill="none" stroke="#b4b4b4" stroke-width="2.6"/><path d="M1422 622.5A22.5 22.5 0 1 0 1422 667.5H1444.5V645A22.5 22.5 0 0 0 1422 622.5Z" fill="#6ad4fb" stroke="#4a4a4a" stroke-width="1"/>
 <path d="M1411 638H1433.5M1411 645H1433.5M1422 652H1433.5" stroke="#4e3c3a" stroke-width="2"/>
</svg>
<div class="a" style="left:660px;top:174px;width:850px;height:1px;background:#eef6ee;opacity:.85"></div>
<div class="a" style="left:641px;top:172px;width:19px;height:87px;background:#f0f0f0;border-top:1px solid #8c8c8c;border-right:1px solid #8c8c8c;border-bottom:1px solid #8c8c8c;border-top-right-radius:3px;border-radius:0 0 2px 0;box-sizing:border-box;overflow:hidden"></div>
<svg style="left:643px;top:179px" width="15" height="9" viewBox="0 0 15 9"><path d="M13.5 1.5H4.2a3 3 0 0 0 0 6h8.3a2 2 0 0 0 0-4H5.2a1 1 0 0 0 0 2H12" stroke="#24467a" stroke-width="1" fill="none"/></svg>
<div class="a" style="left:641px;top:259px;width:19px;height:138px;background:#f0f0f0;border-right:1px solid #8c8c8c;border-bottom:1px solid #8c8c8c;border-radius:0 0 2px 0;box-sizing:border-box;overflow:hidden"></div>
<svg style="left:642px;top:263px" width="16" height="17" viewBox="0 0 16 17"><g fill="none" stroke="#888" stroke-width="1"><circle cx="5" cy="12" r="3.5"/><circle cx="11" cy="5" r="3.5"/><circle cx="5" cy="12" r="1.8"/><circle cx="11" cy="5" r="1.8"/><path d="M7 9.5l2-2"/></g></svg>
<div class="a" style="left:641px;top:397px;width:19px;height:119px;background:#f0f0f0;border-right:1px solid #8c8c8c;border-bottom:1px solid #8c8c8c;border-radius:0 0 2px 0;box-sizing:border-box;overflow:hidden"></div>
<svg style="left:644px;top:401px" width="13" height="13" viewBox="0 0 13 13"><rect x=".5" y=".5" width="12" height="12" fill="#fff" stroke="#7aa0d0"/><rect x="3" y="2.5" width="2.5" height="3" fill="#8a6a30"/><rect x="7.5" y="2.5" width="2.5" height="3" fill="#8a6a30"/><path d="M2.5 8h3M7.5 8h3M2.5 10h3M7.5 10h3" stroke="#9ab"/></svg>
<div class="a" style="left:641px;top:516px;width:19px;height:77px;background:#f0f0f0;border-right:1px solid #8c8c8c;border-bottom:1px solid #8c8c8c;border-radius:0 0 2px 0;box-sizing:border-box;overflow:hidden"></div>
<svg style="left:642px;top:519px" width="17" height="16" viewBox="0 0 17 16"><g fill="#c8d8f0" stroke="#6a8cc0" stroke-width=".8"><path d="M8.5 1L16 8 8.5 15 1 8z" transform="translate(3 0) scale(.8 1)"/><path d="M8.5 1L16 8 8.5 15 1 8z" transform="translate(1.5 0) scale(.8 1)"/><path d="M8.5 1L16 8 8.5 15 1 8z" transform="scale(.8 1)"/></g></svg>
<div class="a" style="left:641px;top:593px;width:19px;height:80px;background:#f0f0f0;border-right:1px solid #8c8c8c;border-bottom:1px solid #8c8c8c;border-radius:0 0 2px 0;box-sizing:border-box;overflow:hidden"></div>
<svg style="left:642px;top:597px" width="17" height="18" viewBox="0 0 17 18"><rect x="1" y="1" width="7" height="6.5" rx="1" fill="#d8b888" stroke="#9a7a48" stroke-width=".8"/><rect x="1" y="10" width="7" height="6.5" rx="1" fill="#d8b888" stroke="#9a7a48" stroke-width=".8"/><path d="M3 4h3M3 13h3" stroke="#7a5a28"/><path d="M12 3c3 1 3 5 0 7M10.5 9l1.8 1.3.2-2.2" stroke="#222" stroke-width="1.1" fill="none"/></svg>
<div class="a" style="left:641px;top:673px;width:19px;height:51px;background:#f0f0f0;border-right:1px solid #8c8c8c;border-bottom:1px solid #8c8c8c;border-radius:0 0 2px 0;box-sizing:border-box;overflow:hidden"></div>
<svg style="left:642px;top:677px" width="16" height="17" viewBox="0 0 16 17"><rect x="3" y="1" width="12" height="12" fill="#9aa4ac" stroke="#6a747c" stroke-width=".8"/><circle cx="10" cy="6" r="3" fill="#2a3440"/><rect x="0.5" y="8.5" width="7" height="7" fill="#1e5aa8"/><path d="M4 10v4M2 12h4" stroke="#fff" stroke-width="1.2"/></svg>
<div class="a" style="left:643px;top:197px;width:16px;height:64px;overflow:hidden"><div style="writing-mode:vertical-rl;font-size:10.8px;line-height:16px;color:#474b5a;white-space:nowrap">Itens Extras</div></div>
<div class="a" style="left:643px;top:285px;width:16px;height:114px;overflow:hidden"><div style="writing-mode:vertical-rl;font-size:11.8px;line-height:16px;color:#474b5a;white-space:nowrap">Inserção Automática</div></div>
<div class="a" style="left:643px;top:423px;width:16px;height:95px;overflow:hidden"><div style="writing-mode:vertical-rl;font-size:11.8px;line-height:16px;color:#474b5a;white-space:nowrap">Lista de Módulos</div></div>
<div class="a" style="left:643px;top:542px;width:16px;height:53px;overflow:hidden"><div style="writing-mode:vertical-rl;font-size:10.6px;line-height:16px;color:#474b5a;white-space:nowrap">Camadas</div></div>
<div class="a" style="left:643px;top:620px;width:16px;height:55px;overflow:hidden"><div style="writing-mode:vertical-rl;font-size:11.85px;line-height:16px;color:#474b5a;white-space:nowrap">Substituir</div></div>
<div class="a" style="left:643px;top:699px;width:16px;height:27px;overflow:hidden"><div style="writing-mode:vertical-rl;font-size:11.8px;line-height:16px;color:#474b5a;white-space:nowrap">Fila de Impressão</div></div>
<div class="a" style="left:1490px;top:172px;width:20px;height:174px;background:#f0f0f0;border-left:1px solid #8c8c8c;border-bottom:1px solid #8c8c8c;border-top:1px solid #8c8c8c;border-radius:3px 0 0 3px;box-sizing:border-box"></div>
<svg style="left:1493px;top:176px" width="16" height="16" viewBox="0 0 16 16"><path d="M1.5 1.5l10 10" stroke="#c8282a" stroke-width="2.2"/><path d="M1 14.5L13 2.5" stroke="#24407a" stroke-width="1.2"/><path d="M11 1.5a3 3 0 0 1 3.5 3.5l-1.5-.5-1 1 .5 1.5A3 3 0 0 1 9 4z M9 9a3 3 0 0 1 5 2c0 2-2 3.5-4 3" fill="none" stroke="#7a9ad0" stroke-width="1"/></svg>
<div class="a" style="left:1492px;top:195px;width:16px;height:148px;overflow:hidden"><div style="writing-mode:vertical-rl;font-size:11.5px;line-height:16px;color:#474b5a;white-space:nowrap">Ferramentas - Propriedades</div></div>

<!-- status row -->
<div class="a" style="left:664px;top:696px;width:822px;height:28px;background:#f3f3f3"></div>
<div class="a" style="left:664px;top:724px;width:822px;height:1px;background:#a4a4a4"></div>
<svg style="left:668px;top:704px" width="15" height="15" viewBox="0 0 15 15"><circle cx="2.5" cy="12.5" r="2" fill="#1a72c8"/><path d="M1.5 6.5a7 7 0 0 1 7 7M1.5 1.5a12 12 0 0 1 12 12" stroke="#1a72c8" stroke-width="2.6" fill="none"/></svg>
<div class="t" style="left:688px;top:705px;font-size:11.9px;color:#111">Connect</div>
<svg style="left:745px;top:705px" width="14" height="14" viewBox="0 0 14 14"><circle cx="7" cy="7" r="6.5" fill="#5aa6e8"/><g stroke="#dbeeff" stroke-width=".8" fill="none"><ellipse cx="7" cy="7" rx="3" ry="6.5"/><path d="M.5 7h13M1.5 3.8h11M1.5 10.2h11M7 .5v13"/></g></svg>
<div class="t" style="left:764px;top:705px;font-size:11px;color:#111">Conexão P</div>
<div class="a" style="left:829px;top:702px;width:63px;height:19px;border:1px solid #2a86e0;background:#fafafa"></div>
<svg style="left:832px;top:704px" width="16" height="15" viewBox="0 0 16 15"><path d="M1 3h5l1.5 1.5H14V13H1z" fill="#e8c060" stroke="#b08a30" stroke-width=".8"/><path d="M3 1l8 .5 1.5 6" fill="#fff" stroke="#aaa" stroke-width=".8"/><path d="M1 13L3.5 6.5H15.5L13 13z" fill="#f6dc90" stroke="#b08a30" stroke-width=".8"/></svg>
<div class="t" style="left:850px;top:705px;font-size:11.7px;color:#111">Projeto</div>
<div class="a" style="left:897px;top:697px;width:507px;height:26px;background:#fbfbfb"></div>
<div class="t" style="left:902px;top:706px;font-size:11.39px;color:#111">Selecionado: Parede -&gt; Parede (4850x150x2600) - (Área: 12,61 m²) - (Normal: 0; 0; 1 Ro...</div>
<svg style="left:1389px;top:709px" width="12" height="12" viewBox="0 0 12 12"><g fill="#a0a0a0"><rect x="9" y="1" width="2" height="2"/><rect x="5" y="5" width="2" height="2"/><rect x="9" y="5" width="2" height="2"/><rect x="1" y="9" width="2" height="2"/><rect x="5" y="9" width="2" height="2"/><rect x="9" y="9" width="2" height="2"/></g></svg>
<div class="a" style="left:1404px;top:697px;width:82px;height:26px;background:#fafafa"></div>
<div class="a" style="left:1409px;top:702px;width:45px;height:19px;border:1px solid #2a86e0;background:#fff"></div>
<svg style="left:1412px;top:704px" width="14" height="16" viewBox="0 0 14 16"><path d="M1 .5h8l3.5 3.5v11.5H1z" fill="#f4f8fc" stroke="#7aa0d8" stroke-width=".8"/><circle cx="7" cy="10.5" r="4" fill="#9aa2a8"/><path d="M4 11l2 1 3-3" stroke="#4a90d8" stroke-width="1" fill="none"/><circle cx="10" cy="11" r="1.5" fill="#d0a040"/></svg>
<svg style="left:1467px;top:708px" width="10" height="10" viewBox="0 0 10 10"><path d="M1 1l8 8M9 1L1 9" stroke="#8a8a8a" stroke-width="1.8"/></svg>
<!-- status bar -->
<div class="a" style="left:641px;top:725px;width:870px;height:23px;background:#f6f6f6"></div>
<div class="t" style="left:644px;top:730px;font-size:11.38px;color:#111">Selecionado: Parede -&gt; Parede (4850x150x2600) - (Área: 12,61 m²) - (Normal: 0; 0; 1 Rot...</div>
<svg style="left:1144px;top:731px" width="17" height="10" viewBox="0 0 17 10"><path d="M1 1l2.5 1M3.5 5.5a3 3 0 1 0 6 0 3 3 0 1 0-6 0M9.5 5.5a3 3 0 1 0 6 0 3 3 0 1 0-6 0M2 1.5l1.6 4" stroke="#222" stroke-width="1.2" fill="none"/></svg>
<div class="t" style="left:1162px;top:728px;font-size:12.2px;color:#111">Mostrar</div>
<svg style="left:1207px;top:734px" width="7" height="4" viewBox="0 0 7 4"><path d="M0 0h7L3.5 4z" fill="#222"/></svg>
<svg style="left:1225px;top:728px" width="17" height="17" viewBox="0 0 17 17"><path d="M1 1h3v15H1z" fill="#e8e0d0" stroke="#6a5a40" stroke-width=".8"/><path d="M5 3.5h3v12.5H5z" fill="#b8987a" stroke="#6a5a40" stroke-width=".8"/><path d="M8 6.5h7M8 9.5h7M8 12.5h7M8 15.5h7" stroke="#6a5a40" stroke-width="1"/></svg>
<div class="t" style="left:1244px;top:728px;font-size:11.5px;color:#111">Colisão</div>
<svg style="left:1295px;top:728px" width="18" height="17" viewBox="0 0 18 17"><rect x=".5" y=".5" width="7" height="16" fill="#b8987a" stroke="#6a5a40" stroke-width=".8"/><rect x="10.5" y=".5" width="7" height="16" fill="#b8987a" stroke="#6a5a40" stroke-width=".8"/><path d="M.5 5.5h7M.5 11.5h7M10.5 5.5h7M10.5 11.5h7" stroke="#6a5a40"/><path d="M9 5v8M5 9h8" stroke="#e01818" stroke-width="2.6"/></svg>
<div class="t" style="left:1314px;top:728px;font-size:11.4px;color:#111">Junções</div>
<svg style="left:1371px;top:729px" width="15" height="16" viewBox="0 0 15 16"><path d="M7.5 1v6M5.5 5l2 2.5 2-2.5" stroke="#e02020" stroke-width="1.4" fill="none"/><rect x="1.5" y="11" width="12" height="4" fill="#e8c890" stroke="#b08a40" stroke-width=".8"/><path d="M4 13h2M8 13h3" stroke="#fff"/></svg>
<div class="t" style="left:1390px;top:728px;font-size:11.4px;color:#111">Auto Rebaixar</div>
<svg style="left:1476px;top:728px" width="17" height="16" viewBox="0 0 17 16"><path d="M7 7l7.5 7.5" stroke="#f0a010" stroke-width="3.6" stroke-linecap="round"/><path d="M2 2.5a3.5 3.5 0 0 0 5 5l1.5-1.5a3.5 3.5 0 0 0-5-5l1.8 1.8-1.4 1.4z" fill="#dcdce8" stroke="#9a9ab0" stroke-width=".8"/></svg>
<svg style="left:1497px;top:735px" width="12" height="12" viewBox="0 0 12 12"><g fill="#a0a0a0"><rect x="9" y="1" width="2" height="2"/><rect x="5" y="5" width="2" height="2"/><rect x="9" y="5" width="2" height="2"/><rect x="1" y="9" width="2" height="2"/><rect x="5" y="9" width="2" height="2"/><rect x="9" y="9" width="2" height="2"/></g></svg>

</body></html>
